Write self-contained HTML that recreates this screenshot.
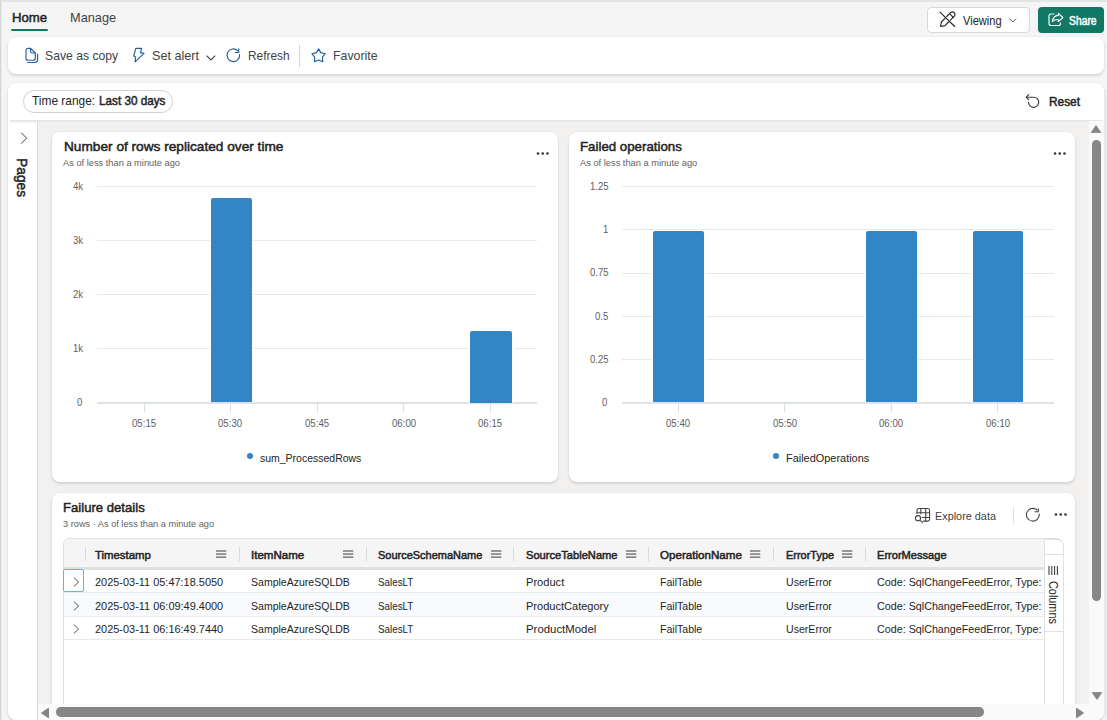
<!DOCTYPE html>
<html><head><meta charset="utf-8">
<style>
html{margin:0;padding:0;width:1107px;height:720px;overflow:hidden;}body{margin:0;padding:0;}
body{width:1107px;height:720px;overflow:hidden;position:relative;background:#f5f5f5;font-family:"Liberation Sans",sans-serif;}
.abs{position:absolute;}
.t{position:absolute;white-space:nowrap;transform-origin:0 50%;}
.card{position:absolute;background:#fff;border-radius:8px;box-shadow:0 0 2px rgba(0,0,0,0.08),0 2px 3px rgba(0,0,0,0.11);}
.bar{background:#3286c6;border-radius:2px 2px 0 0;box-shadow:1.3px 0 0 #fff,-1.3px 0 0 #fff;}
svg{position:absolute;overflow:visible;}
</style></head>
<body>
<!-- outer frame lines -->
<div class="abs" style="left:0;top:0;width:1107px;height:1.6px;background:#e4e4e4"></div>
<div class="abs" style="left:0;top:0;width:1px;height:720px;background:#d6d6d6"></div><div class="abs" style="left:1px;top:0;width:1px;height:720px;background:#ececec"></div>

<div class="abs" style="left:1105px;top:90px;width:2px;height:630px;background:#eeeeee"></div>
<!-- tabs -->
<div class="abs" style="left:11px;top:29px;width:37px;height:2px;background:#117865;border-radius:1px"></div>

<!-- viewing button -->
<div class="abs" style="left:926.5px;top:7px;width:103px;height:25.5px;background:#fff;border:1px solid #d9d9d9;border-radius:4px;box-sizing:border-box"></div>
<svg style="left:936px;top:8px" width="24" height="24" viewBox="0 0 24 24"><g fill="none" stroke="#242424" stroke-width="1.15" stroke-linecap="round" stroke-linejoin="round">
<path d="M4 4.2L18.7 18.5"/><path d="M10.7 8.5L14.5 4.7A2.6 2.6 0 0 1 18.2 8.4L14.4 12.2"/><path d="M12.6 14L9 17.6L4.5 18.5L5.4 14L9 10.4"/><path d="M13.6 5.7L17.2 9.3"/></g></svg>
<svg style="left:1008.5px;top:18.3px" width="8" height="5" viewBox="0 0 8 5"><path d="M0.5 0.6L3.8 4L7.2 0.6" fill="none" stroke="#616161" stroke-width="1"/></svg>

<!-- share button -->
<div class="abs" style="left:1037.7px;top:6.7px;width:66.5px;height:26px;background:#117865;border-radius:4px"></div>
<svg style="left:1044px;top:7px" width="24" height="24" viewBox="0 0 24 24"><g fill="none" stroke="#fff" stroke-width="1.15" stroke-linejoin="round" stroke-linecap="round">
<path d="M10 7H6.8A1.8 1.8 0 0 0 5 8.8V16.7A1.8 1.8 0 0 0 6.8 18.5H14.7A1.8 1.8 0 0 0 16.5 16.7V15.7"/><path d="M14.3 6.3L18.8 10.5L14.3 14.7V12.5C11.6 12.4 9.6 13 8.3 14.5C8.7 11 10.6 8.7 14.3 8.4Z"/></g></svg>

<!-- toolbar card -->
<div class="card" style="left:8px;top:37px;width:1096px;height:37px;"></div>
<svg style="left:22px;top:45px" width="20" height="20" viewBox="0 0 20 20"><g fill="none" stroke="#215f9a" stroke-width="1.15" stroke-linejoin="round" stroke-linecap="round">
<path d="M4 5.3A2 2 0 0 1 6 3.3H8.6L13.3 8V13.2A2 2 0 0 1 11.3 15.2H6A2 2 0 0 1 4 13.2Z"/><path d="M8.6 3.5V6.5A1.5 1.5 0 0 0 10.1 8H13.2"/><path d="M15.6 9V14.5A3 3 0 0 1 12.6 17.5H5.6"/></g></svg>
<svg style="left:128px;top:45px" width="20" height="20" viewBox="0 0 20 20"><path d="M7.8 3.3H13.6L12.5 7.6L16 8.4L7.1 16.9L7.6 11.9L5.7 11Z" fill="none" stroke="#215f9a" stroke-width="1.15" stroke-linejoin="round"/></svg>
<svg style="left:205.5px;top:55px" width="10" height="6" viewBox="0 0 10 6"><path d="M0.6 0.7L4.9 5L9.2 0.7" fill="none" stroke="#424242" stroke-width="1.15"/></svg>
<svg style="left:222px;top:45px" width="20" height="20" viewBox="0 0 20 20"><g fill="none" stroke="#215f9a" stroke-width="1.15" stroke-linecap="round" stroke-linejoin="round">
<path d="M17.6 9.6A6.3 6.3 0 1 1 15.6 5.6"/><path d="M16.7 3.9V7.5H13.3"/></g></svg>
<div class="abs" style="left:299px;top:44.5px;width:1px;height:22px;background:#d6d6d6"></div>
<svg style="left:308px;top:45px" width="20" height="20" viewBox="0 0 20 20"><path d="M10.6 3.9L12.8 7.6L17.3 8.7L14.4 12.1L14.8 16.8L10.6 15L6.5 16.8L6.7 12.1L3.9 8.7L8.4 7.6Z" fill="none" stroke="#215f9a" stroke-width="1.15" stroke-linejoin="round"/></svg>

<!-- main container -->
<div class="card" style="left:8px;top:83px;width:1096px;height:637px;"></div>
<div class="abs" style="left:23.4px;top:90.4px;width:150px;height:22.6px;border:1px solid #d1d1d1;border-radius:11.3px;box-sizing:border-box"></div>
<svg style="left:1020px;top:90px" width="24" height="24" viewBox="0 0 24 24"><g fill="none" stroke="#3b3b3b" stroke-width="1.15" stroke-linecap="round" stroke-linejoin="round">
<path d="M6.5 7.2H13.6A5.1 5.1 0 1 1 8.5 12.3"/><path d="M8.7 4.7L6.3 7.2L8.7 9.7"/></g></svg>

<!-- pages panel -->

<svg style="left:20px;top:132.3px" width="8" height="12" viewBox="0 0 8 12"><path d="M1.2 0.7L6.6 6.1L1.2 11.6" fill="none" stroke="#333" stroke-width="0.95"/></svg>
<span class="t" style="left:14.5px;top:158.4px;font-size:15px;line-height:15px;color:#242424;-webkit-text-stroke:0.5px #242424;transform-origin:0 0;transform:translate(15px,0) rotate(90deg) scaleX(0.92)">Pages</span>

<!-- content canvas -->
<div class="abs" style="left:38px;top:121px;width:1050.5px;height:583px;background:#f2f1f0"></div>
<div class="abs" style="left:9.5px;top:120px;width:1093px;height:2px;background:linear-gradient(#e4e4e4,#ececec)"></div><div class="abs" style="left:9.5px;top:122px;width:27.5px;height:2px;background:linear-gradient(#f4f4f4,#fff)"></div>
<!-- v scrollbar -->
<div class="abs" style="left:1088.5px;top:121px;width:15.5px;height:599px;background:#fafafa;border-bottom-right-radius:8px"></div>
<svg style="left:1091.1px;top:125.4px" width="10" height="8" viewBox="0 0 10 8"><path d="M5 0.5L9.8 7.5H0.2Z" fill="#858585" stroke="#858585" stroke-width="0.8" stroke-linejoin="round"/></svg>
<div class="abs" style="left:1092px;top:139.8px;width:9px;height:461px;background:#868686;border-radius:4.5px"></div>
<svg style="left:1091.6px;top:692px" width="10" height="8" viewBox="0 0 10 8"><path d="M5 7.5L9.8 0.5H0.2Z" fill="#858585" stroke="#858585" stroke-width="0.8" stroke-linejoin="round"/></svg>
<!-- h scrollbar -->
<div class="abs" style="left:38px;top:704px;width:1050.5px;height:16px;background:#fafafa"></div>
<svg style="left:41.3px;top:707.7px" width="8" height="10" viewBox="0 0 8 10"><path d="M0.5 5L7.5 0.2V9.8Z" fill="#858585" stroke="#858585" stroke-width="1" stroke-linejoin="round"/></svg>
<div class="abs" style="left:37px;top:121px;width:1px;height:599px;background:#dadada"></div>
<div class="abs" style="left:56.4px;top:707.2px;width:927.5px;height:9.5px;background:#868686;border-radius:4.75px"></div>
<svg style="left:1075.7px;top:707.8px" width="8" height="10" viewBox="0 0 8 10"><path d="M7.5 5L0.5 0.2V9.8Z" fill="#858585" stroke="#858585" stroke-width="1" stroke-linejoin="round"/></svg>

<!-- clip region for canvas content -->
<div class="abs" style="left:38px;top:121px;width:1050px;height:583px;overflow:hidden">
<div class="abs" style="left:-38px;top:-121px;width:1107px;height:720px">
<div class="card" style="left:52px;top:131.5px;width:506px;height:350px;"></div>
<div class="card" style="left:569px;top:131.5px;width:506px;height:350px;"></div>
<div class="card" style="left:52px;top:493px;width:1023px;height:300px;"></div>
<!-- more dots -->
<svg style="left:537px;top:151.5px" width="13" height="3" viewBox="0 0 13 3"><circle cx="1" cy="1.5" r="1.3" fill="#333"/><circle cx="5.75" cy="1.5" r="1.3" fill="#333"/><circle cx="10.5" cy="1.5" r="1.3" fill="#333"/></svg>
<svg style="left:1054.4px;top:151.5px" width="13" height="3" viewBox="0 0 13 3"><circle cx="1" cy="1.5" r="1.3" fill="#333"/><circle cx="5.75" cy="1.5" r="1.3" fill="#333"/><circle cx="10.5" cy="1.5" r="1.3" fill="#333"/></svg>
<svg style="left:1054.6px;top:513.3px" width="13" height="3" viewBox="0 0 13 3"><circle cx="1" cy="1.5" r="1.3" fill="#333"/><circle cx="5.75" cy="1.5" r="1.3" fill="#333"/><circle cx="10.5" cy="1.5" r="1.3" fill="#333"/></svg>
<div class="abs" style="left:97px;top:186.1px;width:440px;height:1px;background:#e9e9e9"></div>
<div class="abs" style="left:97px;top:240.2px;width:440px;height:1px;background:#e9e9e9"></div>
<div class="abs" style="left:97px;top:294.3px;width:440px;height:1px;background:#e9e9e9"></div>
<div class="abs" style="left:97px;top:348.4px;width:440px;height:1px;background:#e9e9e9"></div>
<div class="abs" style="left:97px;top:402px;width:440px;height:2px;background:#dde2ee"></div>
<div class="abs" style="left:143.5px;top:403px;width:1px;height:9px;background:#d6dcea"></div>
<div class="abs" style="left:230.1px;top:403px;width:1px;height:9px;background:#d6dcea"></div>
<div class="abs" style="left:316.7px;top:403px;width:1px;height:9px;background:#d6dcea"></div>
<div class="abs" style="left:403.3px;top:403px;width:1px;height:9px;background:#d6dcea"></div>
<div class="abs" style="left:489.9px;top:403px;width:1px;height:9px;background:#d6dcea"></div>
<div class="abs bar" style="left:210.5px;top:198.4px;width:41.3px;height:203.8px;"></div>
<div class="abs bar" style="left:469.9px;top:331px;width:41.9px;height:71.5px;"></div>
<div class="abs" style="left:246.5px;top:453px;width:6px;height:6px;border-radius:3px;background:#3286c6"></div>
<div class="abs" style="left:622px;top:186px;width:432px;height:1px;background:#e9e9e9"></div>
<div class="abs" style="left:622px;top:229.3px;width:432px;height:1px;background:#e9e9e9"></div>
<div class="abs" style="left:622px;top:272.6px;width:432px;height:1px;background:#e9e9e9"></div>
<div class="abs" style="left:622px;top:315.9px;width:432px;height:1px;background:#e9e9e9"></div>
<div class="abs" style="left:622px;top:359.2px;width:432px;height:1px;background:#e9e9e9"></div>
<div class="abs" style="left:622px;top:402px;width:432px;height:2px;background:#dde2ee"></div>
<div class="abs" style="left:677.9px;top:403px;width:1px;height:9px;background:#d6dcea"></div>
<div class="abs" style="left:784.3px;top:403px;width:1px;height:9px;background:#d6dcea"></div>
<div class="abs" style="left:890.7px;top:403px;width:1px;height:9px;background:#d6dcea"></div>
<div class="abs" style="left:997.3px;top:403px;width:1px;height:9px;background:#d6dcea"></div>
<div class="abs bar" style="left:653.3px;top:230.6px;width:50.7px;height:171.9px;"></div>
<div class="abs bar" style="left:866px;top:230.6px;width:50.5px;height:171.9px;"></div>
<div class="abs bar" style="left:972.5px;top:230.6px;width:50.4px;height:171.9px;"></div>
<div class="abs" style="left:773px;top:453px;width:6px;height:6px;border-radius:3px;background:#3286c6"></div>
<!-- explore data icon -->
<svg style="left:910px;top:503px" width="24" height="24" viewBox="0 0 24 24"><g fill="none" stroke="#424242" stroke-width="1.05" stroke-linejoin="round" stroke-linecap="round">
<path d="M7 10.6V7.2A1.8 1.8 0 0 1 8.8 5.4H17.8A1.8 1.8 0 0 1 19.6 7.2V16.3A1.8 1.8 0 0 1 17.8 18.1H13"/><path d="M7 9.7H19.6M12.2 14.5H19.6M10.8 5.4V10.8M15.7 5.4V18.1"/><circle cx="8" cy="15.2" r="2.6"/><path d="M10.2 17.4L12.4 19.6"/></g></svg>
<div class="abs" style="left:1012.5px;top:506.5px;width:1px;height:17.5px;background:#e0e0e0"></div>
<svg style="left:1020px;top:503px" width="24" height="24" viewBox="0 0 24 24"><g fill="none" stroke="#424242" stroke-width="1.1" stroke-linecap="round" stroke-linejoin="round">
<path d="M19.2 11A6.4 6.4 0 1 1 16.9 6.8"/><path d="M18.3 5.9V8.7H15"/></g></svg>
<div class="abs" style="left:63.5px;top:538.5px;width:980px;height:30px;background:#f5f5f5;border-top-left-radius:6px;"></div>
<div class="abs" style="left:63px;top:538px;width:1000px;height:300px;border:1px solid #e0e0e0;border-radius:6px;box-sizing:border-box"></div>
<div class="abs" style="left:64px;top:567.4px;width:980px;height:2.4px;background:#e0e0e0"></div>
<div class="abs" style="left:64px;top:592px;width:980px;height:1px;background:#ebebeb"></div>
<div class="abs" style="left:64px;top:615.6px;width:980px;height:1px;background:#ebebeb"></div>
<div class="abs" style="left:64px;top:593px;width:980px;height:22.6px;background:#f8fafd"></div>
<div class="abs" style="left:64px;top:639.2px;width:980px;height:1px;background:#e8e8e8"></div>
<div class="abs" style="left:85.1px;top:546.5px;width:1px;height:14.5px;background:#dadada"></div>
<div class="abs" style="left:238.9px;top:546.5px;width:1px;height:14.5px;background:#dadada"></div>
<div class="abs" style="left:366px;top:546.5px;width:1px;height:14.5px;background:#dadada"></div>
<div class="abs" style="left:513.2px;top:546.5px;width:1px;height:14.5px;background:#dadada"></div>
<div class="abs" style="left:648.1px;top:546.5px;width:1px;height:14.5px;background:#dadada"></div>
<div class="abs" style="left:772.8px;top:546.5px;width:1px;height:14.5px;background:#dadada"></div>
<div class="abs" style="left:864.5px;top:546.5px;width:1px;height:14.5px;background:#dadada"></div>
<svg class="abs" style="left:215.7px;top:550.3px" width="11" height="9" viewBox="0 0 11 9"><path d="M0 1h10.3M0 4.05h10.3M0 7.1h10.3" stroke="#3a3a3a" stroke-width="1"/></svg>
<svg class="abs" style="left:342.9px;top:550.3px" width="11" height="9" viewBox="0 0 11 9"><path d="M0 1h10.3M0 4.05h10.3M0 7.1h10.3" stroke="#3a3a3a" stroke-width="1"/></svg>
<svg class="abs" style="left:490.6px;top:550.3px" width="11" height="9" viewBox="0 0 11 9"><path d="M0 1h10.3M0 4.05h10.3M0 7.1h10.3" stroke="#3a3a3a" stroke-width="1"/></svg>
<svg class="abs" style="left:625.6px;top:550.3px" width="11" height="9" viewBox="0 0 11 9"><path d="M0 1h10.3M0 4.05h10.3M0 7.1h10.3" stroke="#3a3a3a" stroke-width="1"/></svg>
<svg class="abs" style="left:750.3px;top:550.3px" width="11" height="9" viewBox="0 0 11 9"><path d="M0 1h10.3M0 4.05h10.3M0 7.1h10.3" stroke="#3a3a3a" stroke-width="1"/></svg>
<svg class="abs" style="left:841.6px;top:550.3px" width="11" height="9" viewBox="0 0 11 9"><path d="M0 1h10.3M0 4.05h10.3M0 7.1h10.3" stroke="#3a3a3a" stroke-width="1"/></svg>
<div class="abs" style="left:63px;top:569.4px;width:20.8px;height:23px;border:1.9px solid #67aeea;box-sizing:border-box;border-radius:2px"></div>
<svg class="abs" style="left:73.4px;top:577.4px" width="8" height="10" viewBox="0 0 8 10"><path d="M1 0.7L5.6 5L1 9.3" fill="none" stroke="#4a4a4a" stroke-width="0.95"/></svg>
<svg class="abs" style="left:73.4px;top:600.5px" width="8" height="10" viewBox="0 0 8 10"><path d="M1 0.7L5.6 5L1 9.3" fill="none" stroke="#4a4a4a" stroke-width="0.95"/></svg>
<svg class="abs" style="left:73.4px;top:623.9px" width="8" height="10" viewBox="0 0 8 10"><path d="M1 0.7L5.6 5L1 9.3" fill="none" stroke="#4a4a4a" stroke-width="0.95"/></svg>
<div class="abs" style="left:1043.5px;top:538.5px;width:20px;height:300px;background:#fff;border:1px solid #e0e0e0;border-top-right-radius:7px;box-sizing:border-box"></div>
<div class="abs" style="left:1044px;top:554px;width:19px;height:1px;background:#e0e0e0"></div>
<div class="abs" style="left:1044px;top:631px;width:19px;height:1px;background:#e0e0e0"></div>
<svg style="left:1048px;top:566px" width="11" height="9" viewBox="0 0 11 9"><path d="M1 0v9M3.8 0v9M6.6 0v9M9.4 0v9" stroke="#424242" stroke-width="1.1"/></svg>
<span class="t" style="left:1047px;top:580.5px;font-size:12.5px;line-height:12.5px;color:#242424;transform-origin:0 0;transform:translate(12px,0) rotate(90deg) scaleX(0.87)">Columns</span>
</div></div>
<span class="t" style="left:11.7px;top:11px;font-size:13.3px;line-height:13.3px;color:#242424;-webkit-text-stroke:0.5px #242424;transform:scaleX(0.9889);">Home</span>
<span class="t" style="left:69.7px;top:11px;font-size:13.3px;line-height:13.3px;color:#424242;transform:scaleX(0.9604);">Manage</span>
<span class="t" style="left:963.4px;top:15px;font-size:12px;line-height:12px;color:#242424;transform:scaleX(0.9238);">Viewing</span>
<span class="t" style="left:1068.6px;top:15px;font-size:12px;line-height:12px;color:#ffffff;-webkit-text-stroke:0.5px #ffffff;transform:scaleX(0.8625);">Share</span>
<span class="t" style="left:44.5px;top:49px;font-size:13.3px;line-height:13.3px;color:#424242;transform:scaleX(0.9163);">Save as copy</span>
<span class="t" style="left:152.3px;top:49px;font-size:13.3px;line-height:13.3px;color:#424242;transform:scaleX(0.9500);">Set alert</span>
<span class="t" style="left:247.5px;top:49px;font-size:13.3px;line-height:13.3px;color:#424242;transform:scaleX(0.8936);">Refresh</span>
<span class="t" style="left:332.5px;top:49px;font-size:13.3px;line-height:13.3px;color:#424242;transform:scaleX(0.9271);">Favorite</span>
<span class="t" style="left:32.2px;top:95px;font-size:12.9px;line-height:12.9px;color:#242424;transform:scaleX(0.9235);">Time range:</span>
<span class="t" style="left:99px;top:95px;font-size:12.9px;line-height:12.9px;color:#242424;-webkit-text-stroke:0.5px #242424;transform:scaleX(0.9095);">Last 30 days</span>
<span class="t" style="left:1048.5px;top:96px;font-size:12.8px;line-height:12.8px;color:#242424;-webkit-text-stroke:0.5px #242424;transform:scaleX(0.9265);">Reset</span>
<span class="t" style="left:63.5px;top:140px;font-size:13.6px;line-height:13.6px;color:#242424;-webkit-text-stroke:0.5px #242424;transform:scaleX(1.0050);">Number of rows replicated over time</span>
<span class="t" style="left:63.2px;top:158px;font-size:9.5px;line-height:9.5px;color:#616161;transform:scaleX(0.9758);">As of less than a minute ago</span>
<span class="t" style="left:259.7px;top:453px;font-size:11.3px;line-height:11.3px;color:#242424;transform:scaleX(0.9275);">sum_ProcessedRows</span>
<span class="t" style="left:580.4px;top:140px;font-size:13.6px;line-height:13.6px;color:#242424;-webkit-text-stroke:0.5px #242424;transform:scaleX(0.9762);">Failed operations</span>
<span class="t" style="left:580.2px;top:158px;font-size:9.5px;line-height:9.5px;color:#616161;transform:scaleX(0.9783);">As of less than a minute ago</span>
<span class="t" style="left:786.2px;top:453px;font-size:11.3px;line-height:11.3px;color:#242424;transform:scaleX(0.9674);">FailedOperations</span>
<span class="t" style="left:63.4px;top:501px;font-size:13.7px;line-height:13.7px;color:#242424;-webkit-text-stroke:0.5px #242424;transform:scaleX(0.9588);">Failure details</span>
<span class="t" style="left:63.4px;top:519px;font-size:9.8px;line-height:9.8px;color:#616161;transform:scaleX(0.9404);">3 rows · As of less than a minute ago</span>
<span class="t" style="left:934.9px;top:511px;font-size:11.3px;line-height:11.3px;color:#424242;transform:scaleX(0.9609);">Explore data</span>
<span class="t" style="left:95.2px;top:550px;font-size:11.3px;line-height:11.3px;color:#242424;-webkit-text-stroke:0.5px #242424;transform:scaleX(1.0071);">Timestamp</span>
<span class="t" style="left:251.3px;top:550px;font-size:11.3px;line-height:11.3px;color:#242424;-webkit-text-stroke:0.5px #242424;transform:scaleX(1.0212);">ItemName</span>
<span class="t" style="left:378.1px;top:550px;font-size:11.3px;line-height:11.3px;color:#242424;-webkit-text-stroke:0.5px #242424;transform:scaleX(0.9713);">SourceSchemaName</span>
<span class="t" style="left:525.9px;top:550px;font-size:11.3px;line-height:11.3px;color:#242424;-webkit-text-stroke:0.5px #242424;transform:scaleX(0.9849);">SourceTableName</span>
<span class="t" style="left:660.3px;top:550px;font-size:11.3px;line-height:11.3px;color:#242424;-webkit-text-stroke:0.5px #242424;transform:scaleX(1.0263);">OperationName</span>
<span class="t" style="left:785.5px;top:550px;font-size:11.3px;line-height:11.3px;color:#242424;-webkit-text-stroke:0.5px #242424;transform:scaleX(0.9700);">ErrorType</span>
<span class="t" style="left:877px;top:550px;font-size:11.3px;line-height:11.3px;color:#242424;-webkit-text-stroke:0.5px #242424;transform:scaleX(0.9803);">ErrorMessage</span>
<span class="t" style="left:95.2px;top:577px;font-size:11.4px;line-height:11.4px;color:#242424;transform:scaleX(0.9604);">2025-03-11 05:47:18.5050</span>
<span class="t" style="left:251.3px;top:577px;font-size:11.4px;line-height:11.4px;color:#242424;transform:scaleX(0.9243);">SampleAzureSQLDB</span>
<span class="t" style="left:378px;top:577px;font-size:11.4px;line-height:11.4px;color:#242424;transform:scaleX(0.8610);">SalesLT</span>
<span class="t" style="left:526px;top:577px;font-size:11.4px;line-height:11.4px;color:#242424;transform:scaleX(0.9744);">Product</span>
<span class="t" style="left:660.3px;top:577px;font-size:11.4px;line-height:11.4px;color:#242424;transform:scaleX(0.9267);">FailTable</span>
<span class="t" style="left:785.5px;top:577px;font-size:11.4px;line-height:11.4px;color:#242424;transform:scaleX(0.9286);">UserError</span>
<span class="t" style="left:877px;top:577px;font-size:11.4px;line-height:11.4px;color:#242424;transform:scaleX(0.9425);">Code: SqlChangeFeedError, Type:</span>
<span class="t" style="left:95.2px;top:601px;font-size:11.4px;line-height:11.4px;color:#242424;transform:scaleX(0.9604);">2025-03-11 06:09:49.4000</span>
<span class="t" style="left:251.3px;top:601px;font-size:11.4px;line-height:11.4px;color:#242424;transform:scaleX(0.9243);">SampleAzureSQLDB</span>
<span class="t" style="left:378px;top:601px;font-size:11.4px;line-height:11.4px;color:#242424;transform:scaleX(0.8610);">SalesLT</span>
<span class="t" style="left:526px;top:601px;font-size:11.4px;line-height:11.4px;color:#242424;transform:scaleX(0.9686);">ProductCategory</span>
<span class="t" style="left:660.3px;top:601px;font-size:11.4px;line-height:11.4px;color:#242424;transform:scaleX(0.9267);">FailTable</span>
<span class="t" style="left:785.5px;top:601px;font-size:11.4px;line-height:11.4px;color:#242424;transform:scaleX(0.9286);">UserError</span>
<span class="t" style="left:877px;top:601px;font-size:11.4px;line-height:11.4px;color:#242424;transform:scaleX(0.9425);">Code: SqlChangeFeedError, Type:</span>
<span class="t" style="left:95.2px;top:624px;font-size:11.4px;line-height:11.4px;color:#242424;transform:scaleX(0.9604);">2025-03-11 06:16:49.7440</span>
<span class="t" style="left:251.3px;top:624px;font-size:11.4px;line-height:11.4px;color:#242424;transform:scaleX(0.9243);">SampleAzureSQLDB</span>
<span class="t" style="left:378px;top:624px;font-size:11.4px;line-height:11.4px;color:#242424;transform:scaleX(0.8610);">SalesLT</span>
<span class="t" style="left:526px;top:624px;font-size:11.4px;line-height:11.4px;color:#242424;">ProductModel</span>
<span class="t" style="left:660.3px;top:624px;font-size:11.4px;line-height:11.4px;color:#242424;transform:scaleX(0.9267);">FailTable</span>
<span class="t" style="left:785.5px;top:624px;font-size:11.4px;line-height:11.4px;color:#242424;transform:scaleX(0.9286);">UserError</span>
<span class="t" style="left:877px;top:624px;font-size:11.4px;line-height:11.4px;color:#242424;transform:scaleX(0.9425);">Code: SqlChangeFeedError, Type:</span>
<span class="t" style="left:73.24px;top:181px;font-size:11.5px;line-height:11.5px;color:#616161;transform:scaleX(0.8300);">4k</span>
<span class="t" style="left:73.24px;top:235px;font-size:11.5px;line-height:11.5px;color:#616161;transform:scaleX(0.8300);">3k</span>
<span class="t" style="left:73.24px;top:289px;font-size:11.5px;line-height:11.5px;color:#616161;transform:scaleX(0.8300);">2k</span>
<span class="t" style="left:73.24px;top:343px;font-size:11.5px;line-height:11.5px;color:#616161;transform:scaleX(0.8300);">1k</span>
<span class="t" style="left:77.39px;top:397px;font-size:11.5px;line-height:11.5px;color:#616161;transform:scaleX(0.8300);">0</span>
<span class="t" style="left:589.94px;top:181px;font-size:11.5px;line-height:11.5px;color:#616161;transform:scaleX(0.8300);">1.25</span>
<span class="t" style="left:603.22px;top:224px;font-size:11.5px;line-height:11.5px;color:#616161;transform:scaleX(0.8300);">1</span>
<span class="t" style="left:589.94px;top:267px;font-size:11.5px;line-height:11.5px;color:#616161;transform:scaleX(0.8300);">0.75</span>
<span class="t" style="left:594.92px;top:311px;font-size:11.5px;line-height:11.5px;color:#616161;transform:scaleX(0.8300);">0.5</span>
<span class="t" style="left:589.94px;top:354px;font-size:11.5px;line-height:11.5px;color:#616161;transform:scaleX(0.8300);">0.25</span>
<span class="t" style="left:602.39px;top:397px;font-size:11.5px;line-height:11.5px;color:#616161;transform:scaleX(0.8300);">0</span>
<span class="t" style="left:131.85px;top:418px;font-size:11.5px;line-height:11.5px;color:#616161;transform:scaleX(0.8379);">05:15</span>
<span class="t" style="left:218.45px;top:418px;font-size:11.5px;line-height:11.5px;color:#616161;transform:scaleX(0.8379);">05:30</span>
<span class="t" style="left:305.05px;top:418px;font-size:11.5px;line-height:11.5px;color:#616161;transform:scaleX(0.8379);">05:45</span>
<span class="t" style="left:391.65px;top:418px;font-size:11.5px;line-height:11.5px;color:#616161;transform:scaleX(0.8379);">06:00</span>
<span class="t" style="left:478.25px;top:418px;font-size:11.5px;line-height:11.5px;color:#616161;transform:scaleX(0.8379);">06:15</span>
<span class="t" style="left:666.25px;top:418px;font-size:11.5px;line-height:11.5px;color:#616161;transform:scaleX(0.8379);">05:40</span>
<span class="t" style="left:772.65px;top:418px;font-size:11.5px;line-height:11.5px;color:#616161;transform:scaleX(0.8379);">05:50</span>
<span class="t" style="left:879.05px;top:418px;font-size:11.5px;line-height:11.5px;color:#616161;transform:scaleX(0.8379);">06:00</span>
<span class="t" style="left:985.65px;top:418px;font-size:11.5px;line-height:11.5px;color:#616161;transform:scaleX(0.8379);">06:10</span>
</body></html>
